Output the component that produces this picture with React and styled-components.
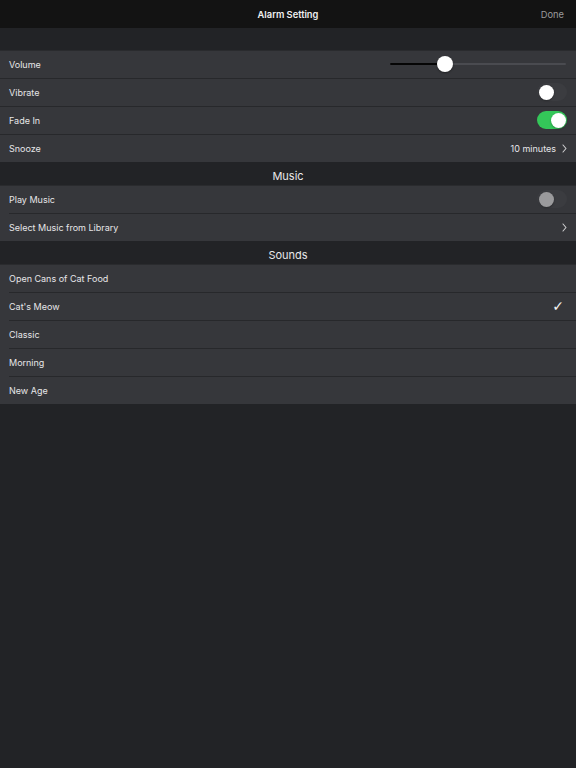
import React from 'react';
import styled, { createGlobalStyle } from 'styled-components';

const GlobalStyle = createGlobalStyle`
  html, body {
    margin: 0;
    padding: 0;
    background: #222326;
  }
  body {
    font-family: Inter, "Liberation Sans", sans-serif;
    -webkit-font-smoothing: antialiased;
  }
`;

const Page = styled.div`
  width: 576px;
  min-height: 768px;
  background: #222326;
  color: #e4e4e6;
`;

const NavBar = styled.header`
  height: 28px;
  background: #131313;
  display: grid;
  grid-template-columns: 1fr auto 1fr;
  align-items: center;
  padding: 0 12px;
`;

const NavTitle = styled.h1`
  margin: 0;
  font-size: 9.3px;
  font-weight: 600;
  color: #f0f0f0;
`;

const NavButton = styled.span`
  justify-self: end;
  font-size: 9.3px;
  color: #9a9a9c;
`;

const Spacer = styled.div`
  height: 22px;
`;

const SectionHeader = styled.div`
  height: 23px;
  box-sizing: border-box;
  padding-top: 7px;
  text-align: center;
  font-size: 11px;
  line-height: 14px;
  color: #e8e8ea;
`;

const Group = styled.section`
  background: #36373b;
  box-shadow: inset 0 1px 0 #2a2b2e;
`;

const Row = styled.div`
  height: 28px;
  display: flex;
  align-items: center;
  justify-content: space-between;
  padding: 0 9px;
  position: relative;
  box-sizing: border-box;

  & + &::before {
    content: '';
    position: absolute;
    top: 0;
    left: ${(p) => (p.$inset ? '9px' : '0')};
    right: 0;
    height: 1px;
    background: #27282b;
  }
`;

const Label = styled.span`
  font-size: 9px;
  color: #e6e6e8;
`;

const Detail = styled.span`
  display: flex;
  align-items: center;
  gap: 6px;
  font-size: 9px;
  color: #e6e6e8;
`;

const SliderTrack = styled.div`
  width: 176px;
  height: 2px;
  background: #4a4b50;
  border-radius: 1px;
  position: relative;
  margin-right: 1px;
`;

const SliderFill = styled.div`
  height: 2px;
  background: #050505;
  border-radius: 1px;
`;

const SliderThumb = styled.div`
  position: absolute;
  top: -7px;
  width: 16px;
  height: 16px;
  margin-left: -8px;
  border-radius: 50%;
  background: #ffffff;
  box-shadow: 0 1px 2px rgba(0, 0, 0, 0.4);
`;

const SwitchTrack = styled.div`
  width: 30px;
  height: 18px;
  border-radius: 9px;
  background: ${(p) => (p.$on ? '#34c759' : '#3b3c40')};
  display: flex;
  align-items: center;
  justify-content: ${(p) => (p.$on ? 'flex-end' : 'flex-start')};
  padding: 0 1.5px;
  box-sizing: border-box;
`;

const SwitchThumb = styled.div`
  width: 15px;
  height: 15px;
  border-radius: 50%;
  background: ${(p) => (p.$disabled ? '#9a9a9c' : '#ffffff')};
  box-shadow: 0 1px 2px rgba(0, 0, 0, 0.3);
`;

const Check = styled.span`
  font-family: "DejaVu Sans", sans-serif;
  font-size: 14px;
  line-height: 14px;
  color: #f2f2f2;
  margin-right: 3px;
`;

function Chevron() {
  return (
    <svg width="5" height="9" viewBox="0 0 5 9">
      <path d="M1 1 L4 4.5 L1 8" fill="none" stroke="#cfcfd1" strokeWidth="1.1" strokeLinecap="round" strokeLinejoin="round" />
    </svg>
  );
}

function Switch({ on, disabled }) {
  return (
    <SwitchTrack $on={on}>
      <SwitchThumb $disabled={disabled} />
    </SwitchTrack>
  );
}

function Slider({ value }) {
  return (
    <SliderTrack>
      <SliderFill style={{ width: `${value * 100}%` }} />
      <SliderThumb style={{ left: `${value * 100}%` }} />
    </SliderTrack>
  );
}

const sounds = ['Open Cans of Cat Food', "Cat's Meow", 'Classic', 'Morning', 'New Age'];

export default function App() {
  return (
    <Page>
      <GlobalStyle />
      <NavBar>
        <span />
        <NavTitle>Alarm Setting</NavTitle>
        <NavButton>Done</NavButton>
      </NavBar>
      <Spacer />
      <Group>
        <Row>
          <Label>Volume</Label>
          <Slider value={0.31} />
        </Row>
        <Row>
          <Label>Vibrate</Label>
          <Switch on={false} />
        </Row>
        <Row>
          <Label>Fade In</Label>
          <Switch on />
        </Row>
        <Row>
          <Label>Snooze</Label>
          <Detail>
            10 minutes <Chevron />
          </Detail>
        </Row>
      </Group>
      <SectionHeader>Music</SectionHeader>
      <Group>
        <Row $inset>
          <Label>Play Music</Label>
          <Switch on={false} disabled />
        </Row>
        <Row $inset>
          <Label>Select Music from Library</Label>
          <Detail>
            <Chevron />
          </Detail>
        </Row>
      </Group>
      <SectionHeader>Sounds</SectionHeader>
      <Group>
        {sounds.map((s) => (
          <Row $inset key={s}>
            <Label>{s}</Label>
            {s === "Cat's Meow" && <Check>✓</Check>}
          </Row>
        ))}
      </Group>
    </Page>
  );
}
